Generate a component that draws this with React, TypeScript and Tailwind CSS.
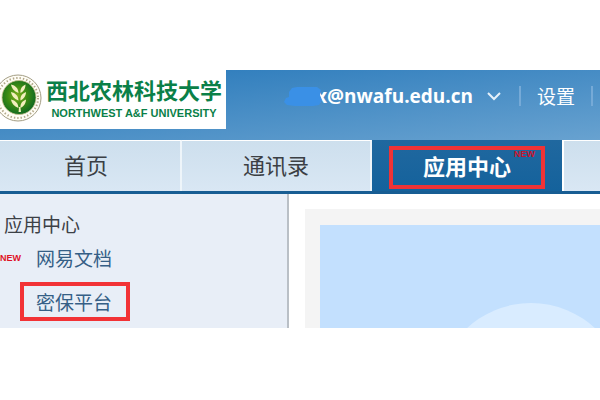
import React from "react";
import clsx from "clsx";

const tabs = [
  { label: "首页", active: false },
  { label: "通讯录", active: false },
  { label: "应用中心", active: true },
];

function Emblem() {
  return (
    <svg viewBox="0 0 42 48" className="h-12 w-[42px] shrink-0" aria-hidden="true">
      <defs>
        <radialGradient id="seal" cx="45%" cy="45%" r="60%">
          <stop offset="0" stopColor="#7fae1c" />
          <stop offset="0.5" stopColor="#3b8a14" />
          <stop offset="1" stopColor="#0a6423" />
        </radialGradient>
      </defs>
      <circle cx="18" cy="24" r="23" fill="#fffdf6" stroke="#a39d84" strokeWidth="1" />
      <circle cx="18" cy="24" r="20" fill="none" stroke="#b3a98a" strokeWidth="2" strokeDasharray="1.4 2" />
      <circle cx="19" cy="23.5" r="17" fill="url(#seal)" stroke="#c8c08a" strokeWidth="0.8" />
      <g fill="#f3efbd">
        <path d="M18.500 19c-4.500-1.500-7-5-7.500-8.500 4.500 1 7.500 4 7.500 8.500zM20.500 19c3.500-1.500 5-5 5-8.500-3.500 1.500-5.500 4.500-5 8.500z" />
        <path d="M18.500 26.500c-4.500-1.500-7-5-7.500-8.500 4.500 1 7.500 4 7.500 8.500zM20.500 26.500c3.500-1.500 5.500-5 5.500-8.500-4 1.500-6 4.500-5.500 8.500z" />
        <path d="M18.500 34c-4.500-1.500-7-5-7.500-8.500 4.500 1 7.500 4 7.500 8.500zM20.500 34c3.500-1.500 5.500-5 5.500-8.500-4 1.500-6 4.500-5.500 8.500z" />
        <path d="M19 33h1.400l.6 5h-2.400z" />
      </g>
    </svg>
  );
}

function Header() {
  return (
    <header className="flex items-start bg-linear-[174deg] from-[#2778ba] to-[#68a2d0] pb-[11px]">
      <div className="flex h-[59px] w-[226px] shrink-0 items-start bg-white pt-1">
        <Emblem />
        <div className="flex flex-1 flex-col items-center gap-1 pt-1 whitespace-nowrap text-[#0a8048]">
          <span className="font-['Noto_Sans_CJK_SC',sans-serif] text-[22px] leading-[23px] font-bold">
            西北农林科技大学
          </span>
          <span className="font-['Liberation_Sans',sans-serif] text-[11px] leading-4 font-bold">
            NORTHWEST A&amp;F UNIVERSITY
          </span>
        </div>
      </div>
      <div className="flex flex-1 items-center justify-end pt-3 text-white">
        <button type="button" className="flex items-center gap-3.5 whitespace-nowrap">
          <span className="relative font-['Open_Sans',sans-serif] text-[19px] leading-7 font-bold">
            x@nwafu.edu.cn
            <svg viewBox="0 0 40 22" className="absolute top-1 -left-8 h-[22px] w-10" aria-hidden="true">
              <path
                d="M5 6 8 2l5-1h20l4 3-1 5 2 5-3 5-6 1H11l-8-1-3-3 2-4 3-1z"
                fill="#3a90e6"
              />
            </svg>
          </span>
          <svg viewBox="0 0 14 10" className="h-2.5 w-3.5" fill="none" stroke="#e6f1fa" strokeWidth="2" aria-hidden="true">
            <path d="M1 2l6 6 6-6" />
          </svg>
        </button>
        <span className="ml-[18px] h-5 w-0.5 bg-[#76aad7]" />
        <a href="#settings" className="ml-4 font-['Noto_Sans_CJK_SC',sans-serif] text-[19px] leading-6">
          设置
        </a>
        <span className="mr-[7px] ml-4 h-5 w-0.5 bg-[#76aad7]" />
      </div>
    </header>
  );
}

function NavTabs() {
  return (
    <nav className="grid grid-cols-[182fr_190fr_190fr_38fr] border-b-[3px] border-[#175d93] font-['Noto_Sans_CJK_SC',sans-serif] text-[22px]">
      {tabs.map((t) => (
        <a
          key={t.label}
          href={`#${t.label}`}
          className={clsx(
            "flex items-center justify-center",
            t.active
              ? "bg-linear-to-b from-[#20689f] to-[#14629c] font-bold text-white"
              : "border-t border-r-2 border-t-white border-r-[#eef5fa] bg-linear-to-b from-[#cddfed] to-[#d9e7f4] pb-1 text-[#3b3f44] first:pr-2"
          )}
        >
          {t.active ? (
            <span className="relative mt-1.5 mb-0.5 border-4 border-[#ef3336] px-[30px] pb-1 leading-[31px] whitespace-nowrap">
              {t.label}
              <span className="absolute top-0 right-1.5 font-['Liberation_Sans',sans-serif] text-[9px] leading-[9px] text-[#c8142c]">
                NEW
              </span>
            </span>
          ) : (
            t.label
          )}
        </a>
      ))}
      <span className="border-t border-l-2 border-white bg-linear-to-b from-[#cddfed] to-[#d9e7f4]" />
    </nav>
  );
}

function Sidebar() {
  return (
    <aside className="w-[289px] shrink-0 border-r-2 border-[#b9bfc6] bg-[#e8eef7] pt-[15px] pb-[7px] font-['Noto_Sans_CJK_SC',sans-serif] text-[19px]">
      <h2 className="pl-1 leading-[29px] text-[#3c4046]">应用中心</h2>
      <ul className="text-[#355f86]">
        <li className="flex items-center pb-1">
          <span className="w-9 font-['Liberation_Sans',sans-serif] text-[9px] leading-5 font-bold text-[#e01226]">
            NEW
          </span>
          <a href="#docs" className="leading-10">
            网易文档
          </a>
        </li>
        <li className="flex pl-5">
          <a href="#security" className="border-4 border-[#f23236] pr-[14px] pl-3 leading-[31px]">
            密保平台
          </a>
        </li>
      </ul>
    </aside>
  );
}

function Content() {
  return (
    <main className="flex-1 bg-white pt-[15px] pl-4">
      <div className="bg-[#f4f4f4] pt-4 pl-[15px]">
        <svg viewBox="0 0 280 103" className="block w-full bg-[#c3e0fe]" aria-hidden="true">
          <circle cx="211" cy="172" r="94" fill="#d9ecff" />
        </svg>
      </div>
    </main>
  );
}

export default function App() {
  return (
    <div className="min-h-screen bg-white pt-[70px]">
      <div className="overflow-hidden">
        <Header />
        <NavTabs />
        <div className="flex">
          <Sidebar />
          <Content />
        </div>
      </div>
    </div>
  );
}
